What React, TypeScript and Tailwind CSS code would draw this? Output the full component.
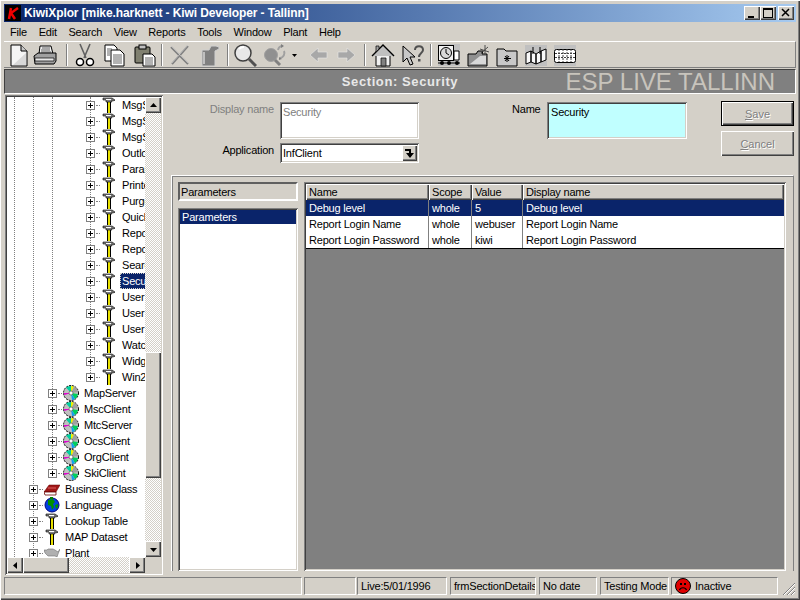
import React from "react"

const raised = "shadow-[inset_1px_1px_0_#fff,inset_-1px_-1px_0_#404040,inset_-2px_-2px_0_#808080]"
const sunken = "shadow-[inset_1px_1px_0_#808080,inset_-1px_-1px_0_#fff,inset_2px_2px_0_#404040,inset_-2px_-2px_0_#d4d0c8]"
const thin = "border border-t-[#808080] border-l-[#808080] border-b-white border-r-white"
const dither = "bg-[repeating-conic-gradient(#d4d0c8_0_25%,#fff_0_50%)] bg-size-[2px_2px]"

const Hammer = () => (
  <svg width="16" height="16" viewBox="0 0 16 16" className="shrink-0">
    <rect x="6" y="3" width="4" height="13" fill="#000" />
    <rect x="7" y="4" width="2" height="12" fill="#e8e000" />
    <path d="M2 1h9l3 2-1 1-2-1v2H5V3H2z" fill="#808080" stroke="#000" strokeWidth="0.6" />
    <rect x="5" y="2" width="5" height="1" fill="#fff" />
  </svg>
)

const Cd = () => (
  <svg width="16" height="16" viewBox="0 0 16 16" className="shrink-0">
    <circle cx="8" cy="8" r="7.500" fill="#c0c0c0" stroke="#000" strokeDasharray="2 1" />
    <path d="M8 8L3 2.500A7 7 0 0 1 8 1z" fill="#00d0a0" />
    <path d="M8 8V1a7 7 0 0 1 3 .7z" fill="#f0f000" />
    <path d="M8 8l3-6.300A7 7 0 0 1 15 7z" fill="#a0a0a0" />
    <path d="M8 8l7 1a7 7 0 0 1-3 5z" fill="#00d060" />
    <path d="M8 8l4 6a7 7 0 0 1-3 1z" fill="#10a0f0" />
    <path d="M8 8H1a7 7 0 0 0 .3 2z" fill="#e000d0" />
    <circle cx="8" cy="8" r="2" fill="#fff" stroke="#404040" strokeWidth="0.6" />
  </svg>
)

const Book = () => (
  <svg width="16" height="16" viewBox="0 0 16 16" className="shrink-0">
    <path d="M0 11l5-7h11l-4 7z" fill="#a01818" stroke="#600" strokeWidth="0.5" />
    <path d="M0 11h12v3H1z" fill="#fff" stroke="#600" strokeWidth="0.8" />
    <path d="M4 7h8" stroke="#e06060" />
  </svg>
)

const Globe = () => (
  <svg width="16" height="16" viewBox="0 0 16 16" className="shrink-0">
    <circle cx="8" cy="8" r="7" fill="#0040e0" stroke="#000080" />
    <path d="M4 3l5-1 2 3-2 2 1 3-2 3-1-4-3-1zM11 8l3-1v3l-2 2z" fill="#009000" />
    <path d="M6 0h3v2H6z" fill="#008000" />
  </svg>
)

const MapIcon = () => (
  <svg width="16" height="16" viewBox="0 0 16 16" className="shrink-0">
    <path d="M0 5h3l1-1h5l2 1 3 2 2-3-2 5-1 3-2-1H4L1 8z" fill="#b0b0b0" stroke="#707070" strokeWidth="0.6" />
  </svg>
)

const Box = () => (
  <span className="w-[9px] h-[9px] shrink-0 bg-white border border-[#808080] relative block">
    <span className="absolute left-[1px] top-[3px] w-[5px] h-[1px] bg-black" />
    <span className="absolute left-[3px] top-[1px] w-[1px] h-[5px] bg-black" />
  </span>
)

type Row = { text: string; level: number; icon: React.ReactNode; selected?: boolean }

const h = <Hammer />
const c = <Cd />
const rows: Row[] = [
  { text: "MsgServer", level: 3, icon: h },
  { text: "MsgServer", level: 3, icon: h },
  { text: "MsgServer", level: 3, icon: h },
  { text: "Outlook", level: 3, icon: h },
  { text: "Parameters", level: 3, icon: h },
  { text: "Printer", level: 3, icon: h },
  { text: "Purge", level: 3, icon: h },
  { text: "QuickFind", level: 3, icon: h },
  { text: "Report", level: 3, icon: h },
  { text: "Report", level: 3, icon: h },
  { text: "Search", level: 3, icon: h },
  { text: "Security", level: 3, icon: h, selected: true },
  { text: "User", level: 3, icon: h },
  { text: "User", level: 3, icon: h },
  { text: "User", level: 3, icon: h },
  { text: "Watch", level: 3, icon: h },
  { text: "Widget", level: 3, icon: h },
  { text: "Win2000", level: 3, icon: h },
  { text: "MapServer", level: 2, icon: c },
  { text: "MscClient", level: 2, icon: c },
  { text: "MtcServer", level: 2, icon: c },
  { text: "OcsClient", level: 2, icon: c },
  { text: "OrgClient", level: 2, icon: c },
  { text: "SkiClient", level: 2, icon: c },
  { text: "Business Class", level: 1, icon: <Book /> },
  { text: "Language", level: 1, icon: <Globe /> },
  { text: "Lookup Table", level: 1, icon: h },
  { text: "MAP Dataset", level: 1, icon: h },
  { text: "Plant", level: 1, icon: <MapIcon /> },
]

const levelPad: Record<number, string> = { 1: "pl-[22px]", 2: "pl-[41px]", 3: "pl-[79px]" }

const Arrow = ({ dir }: { dir: "up" | "down" | "left" | "right" }) => {
  const d = { up: "M1 6h7L4.500 2z", down: "M1 3h7L4.500 7z", left: "M6 1v7L2 4.500z", right: "M3 1v7l4-3.500z" }[dir]
  return (
    <span className={`w-4 h-4 shrink-0 bg-[#d4d0c8] flex items-center justify-center ${raised}`}>
      <svg width="9" height="9" viewBox="0 0 9 9"><path d={d} fill="#000" /></svg>
    </span>
  )
}

const Tree = () => (
  <div className={`w-[158px] h-[480px] p-[2px] flex flex-col bg-white shrink-0 ${sunken}`}>
    <div className="flex flex-1 min-h-0">
      <div className="relative flex-1 overflow-hidden">
        <span className="absolute left-[7px] top-0 bottom-0 border-l border-dotted border-[#808080]" />
        <span className="absolute left-[26px] top-0 h-[457px] border-l border-dotted border-[#808080]" />
        <span className="absolute left-[45px] top-0 h-[376px] border-l border-dotted border-[#808080]" />
        <span className="absolute left-[83px] top-0 h-[280px] border-l border-dotted border-[#808080]" />
        <div className="relative">
          {rows.map((r, i) => (
            <div key={i} className={`h-4 flex items-center whitespace-nowrap ${levelPad[r.level]}`}>
              <Box />
              <span className="w-[4px] mx-[1px] border-t border-dotted border-[#808080] shrink-0" />
              <span className="shrink-0">{r.icon}</span>
              {r.selected ? (
                <span className="ml-[3px] pl-[2px] pr-[8px] h-4 leading-4 bg-[#0a246a] text-white outline-1 outline-dotted outline-[#d4d0c8] -outline-offset-1">{r.text}</span>
              ) : (
                <span className="ml-[5px]">{r.text}</span>
              )}
            </div>
          ))}
        </div>
      </div>
      <div className="w-4 flex flex-col shrink-0">
        <Arrow dir="up" />
        <div className={`h-[239px] ${dither}`} />
        <div className={`h-[126px] bg-[#d4d0c8] ${raised}`} />
        <div className={`flex-1 ${dither}`} />
        <Arrow dir="down" />
      </div>
    </div>
    <div className="h-4 flex shrink-0">
      <Arrow dir="left" />
      <div className={`w-[46px] bg-[#d4d0c8] ${raised}`} />
      <div className={`flex-1 ${dither}`} />
      <Arrow dir="right" />
      <div className="w-4 bg-[#d4d0c8]" />
    </div>
  </div>
)

const Ico = ({ className = "", children }: { className?: string; children: React.ReactNode }) => (
  <svg width="24" height="24" viewBox="0 0 24 24" className={`shrink-0 ${className}`}>{children}</svg>
)

const Sep = ({ className = "" }: { className?: string }) => (
  <span className={`w-[2px] h-[22px] border-l border-l-[#808080] border-r border-r-white shrink-0 ${className}`} />
)

const Toolbar = () => (
  <div className="h-[27px] flex items-center border-t border-t-white border-b border-b-[#808080] border-r border-r-[#808080] pl-[3px] shrink-0">
    <Ico>
      <path d="M4 2h10l6 6v15H4z" fill="#f4f4f4" stroke="#000" />
      <path d="M14 2v6h6" fill="#c8c8c8" stroke="#000" />
      <path d="M6 22L19 10v12z" fill="#d8d8d8" />
    </Ico>
    <Ico className="ml-[2px]">
      <path d="M7 3h11l2 8H6z" fill="#f0f0f0" stroke="#000" />
      <path d="M9 5h8M8 7h9M8 9h10" stroke="#606060" />
      <path d="M1 13l4-3h18v8l-2 3H2z" fill="#a0a0a0" stroke="#000" />
      <path d="M2 15h19v3H2z" fill="#e8e8e8" stroke="#000" strokeWidth="0.7" />
    </Ico>
    <Sep className="ml-[9px]" />
    <Ico className="ml-[5px]">
      <path d="M7 1l6 14M17 1l-6 14" stroke="#606060" strokeWidth="1.600" fill="none" />
      <circle cx="7" cy="19" r="3.500" fill="#fff" stroke="#000" strokeWidth="1.500" />
      <circle cx="17" cy="19" r="3.500" fill="#fff" stroke="#000" strokeWidth="1.500" />
    </Ico>
    <Ico className="ml-[5px]">
      <path d="M3 2h9l3 3v13H3z" fill="#fff" stroke="#000" />
      <path d="M9 7h9l4 4v12H9z" fill="#fff" stroke="#000" />
      <path d="M11 12h9M11 14h9M11 16h9M11 18h9M11 20h9M5 6h5M5 8h3M5 10h3M5 12h3" stroke="#404040" strokeWidth="0.8" />
    </Ico>
    <Ico className="ml-[6px]">
      <rect x="3" y="4" width="15" height="16" rx="1" fill="#808070" stroke="#000" />
      <rect x="7" y="2" width="7" height="4" fill="#c0c0c0" stroke="#000" />
      <path d="M11 11h9l3 3v9H11z" fill="#fff" stroke="#000" />
      <path d="M13 15h8M13 17h8M13 19h8M13 21h8" stroke="#404040" strokeWidth="0.8" />
    </Ico>
    <Sep className="ml-[5px]" />
    <Ico className="ml-[5px]">
      <path d="M3 4l17 17M20 3L4 21" stroke="#808080" strokeWidth="2" />
      <path d="M3 3l17 17M20 2L4 20" stroke="#d8d8d8" strokeWidth="0.6" />
    </Ico>
    <Ico className="ml-[5px]">
      <path d="M5 7h7l2-4h5l3 1v2l-4 2v15H5z" fill="#808080" stroke="#d0d0d0" />
      <path d="M7 9v12" stroke="#fff" />
    </Ico>
    <Sep className="ml-[6px]" />
    <Ico className="ml-[4px]">
      <circle cx="10" cy="10" r="8" fill="#e8e8e8" stroke="#404040" strokeWidth="1.500" />
      <path d="M6 6a6 6 0 0 1 5-2" stroke="#fff" strokeWidth="2" fill="none" />
      <path d="M16 16l7 7" stroke="#505050" strokeWidth="3" />
    </Ico>
    <Ico className="ml-[6px]">
      <circle cx="8" cy="12" r="6.500" fill="#909090" stroke="#a0a0a0" />
      <path d="M12 17l5 5" stroke="#808080" strokeWidth="3" />
      <path d="M15 7a5 5 0 0 1 5-4M21 8a5 5 0 0 1-4 7" stroke="#a0a0a0" strokeWidth="2" fill="none" />
      <path d="M18 1l3 2-3 2zM19 16l-3-2v3z" fill="#808080" />
    </Ico>
    <svg width="6" height="24" viewBox="0 0 6 24" className="ml-[5px] shrink-0"><path d="M0 11h5l-2.500 3z" fill="#000" /></svg>
    <Ico className="ml-[8px]">
      <path d="M4 12l8-7v4h9v6h-9v4z" fill="#a8a8a8" stroke="#e8e8e8" strokeWidth="0.600" />
    </Ico>
    <Ico className="ml-[4px]">
      <path d="M21 12l-8-7v4H4v6h9v4z" fill="#a8a8a8" stroke="#e8e8e8" strokeWidth="0.600" />
    </Ico>
    <Sep className="ml-[6px]" />
    <Ico className="ml-[5px]">
      <path d="M5 11v12h14V11" fill="#f0f0f0" stroke="#000" />
      <path d="M1 13L12 2l11 11" fill="#c0c0c0" stroke="#000" strokeWidth="1.400" />
      <path d="M5 3h3v3l-3 3z" fill="#a0a0a0" stroke="#000" strokeWidth="0.7" />
      <path d="M10 15h5v8h-5z" fill="#808080" stroke="#000" strokeWidth="0.7" />
    </Ico>
    <Ico className="ml-[5px]">
      <path d="M3 3v16l4-4 3 7 3-1-3-7h5z" fill="#c8c8c8" stroke="#000" />
      <path d="M15 7c0-5 8-5 8 0 0 3-4 3-4 7" fill="none" stroke="#505050" strokeWidth="2" />
      <rect x="18" y="16" width="2.500" height="2.500" fill="#505050" />
    </Ico>
    <Sep className="ml-[6px]" />
    <Ico className="ml-[5px]">
      <rect x="1" y="1" width="22" height="22" fill="#c0c0c0" />
      <rect x="1.500" y="2.500" width="15" height="15" fill="#f0f0f0" stroke="#000" />
      <path d="M17 8h5v9h-5z" fill="#fff" stroke="#000" />
      <circle cx="9" cy="10" r="5.500" fill="#d8d8d8" stroke="#000" />
      <path d="M9 6v4l3 2" stroke="#000" fill="none" />
      <path d="M1 20h22" stroke="#000" />
      <circle cx="5" cy="20" r="2" /><circle cx="12" cy="20" r="2" /><circle cx="20" cy="20" r="2" />
    </Ico>
    <Ico className="ml-[5px]">
      <path d="M2 11h8l2-3h5l-1 3h5v12H2z" fill="#909090" stroke="#000" />
      <path d="M4 21L14 13h6v8z" fill="#d8d8d8" />
      <path d="M19 2v9M14 6l9 3M15 10l7-6" stroke="#404040" strokeWidth="0.9" />
    </Ico>
    <Ico className="ml-[5px]">
      <path d="M2 6h7l2 2h11v15H2z" fill="#c8c8c8" stroke="#000" />
      <path d="M12 12v7M9 15.500h7M10 13l4 5M14 13l-4 5" stroke="#000" strokeWidth="1" />
    </Ico>
    <Ico className="ml-[5px]">
      <rect x="1" y="2" width="22" height="21" fill="#c0c0c0" />
      <path d="M2 10l5-2v11l-5 2zM7 8l5 3v10l-5-2zM12 11l5-3v11l-5 2zM17 8l5-2v11l-5 2z" fill="#f8f8f8" stroke="#000" />
      <path d="M9 4v7M16 4v7" stroke="#000" />
    </Ico>
    <Ico className="ml-[5px]">
      <rect x="1" y="2" width="22" height="21" fill="#c0c0c0" />
      <rect x="1.500" y="6.500" width="21" height="13" rx="2" fill="#fff" stroke="#000" />
      <path d="M6 6v13M10 6v13M14 6v13M18 6v13M2 10.500h20M2 14.500h20" stroke="#404040" strokeDasharray="2 1" />
    </Ico>
  </div>
)

const WinBtn = ({ children, className = "" }: { children: React.ReactNode; className?: string }) => (
  <span className={`w-4 h-[14px] bg-[#d4d0c8] flex items-center justify-center ${raised} ${className}`}>
    <svg width="10" height="10" viewBox="0 0 10 10">{children}</svg>
  </span>
)

const TableRow = ({ cells, selected }: { cells: string[]; selected?: boolean }) => (
  <div className={`grid grid-cols-[123px_43px_51px_1fr] h-4 leading-4 ${selected ? "bg-[#0a246a] text-white" : "bg-white"}`}>
    {cells.map((t, i) => (
      <div key={i} className={`pl-[3px] whitespace-nowrap ${i < 3 ? "border-r border-r-[#808080]" : ""}`}>{t}</div>
    ))}
  </div>
)

const Status = ({ className, children }: { className: string; children?: React.ReactNode }) => (
  <div className={`${thin} h-[18px] flex items-center pl-[3px] overflow-hidden whitespace-nowrap shrink-0 ${className}`}>{children}</div>
)

export default function App() {
  return (
    <div className={`w-[800px] h-[600px] bg-[#d4d0c8] p-[4px] flex flex-col text-[11px] leading-[14px] text-black overflow-hidden font-['Liberation_Sans',sans-serif] tracking-[-0.2px] ${raised}`}>
      <div className="h-[18px] bg-linear-to-r from-[#0a246a] to-[#a6caf0] flex items-center pl-[1px] pr-[2px] text-white font-bold text-[12px] tracking-[-0.1px] shrink-0">
        <svg width="16" height="16" viewBox="0 0 16 16" className="shrink-0">
          <rect width="16" height="16" fill="#000" />
          <path d="M6 3L4 14M13 3L6 8l4 6" stroke="#f00000" strokeWidth="2.500" fill="none" />
        </svg>
        <span className="ml-[3px]">KiwiXplor [mike.harknett - Kiwi Developer - Tallinn]</span>
        <span className="ml-auto flex">
          <WinBtn><path d="M1 8h6v2H1z" /></WinBtn>
          <WinBtn><path d="M0 0h10v10H0zM1 2v7h8V2z" fillRule="evenodd" /></WinBtn>
          <WinBtn className="ml-[2px]"><path d="M1 1l7 7M8 1L1 8" stroke="#000" strokeWidth="1.500" /></WinBtn>
        </span>
      </div>
      <div className="h-[19px] flex items-center shrink-0 pl-[6px] gap-[11.7px] pt-[1px]">
        {["File", "Edit", "Search", "View", "Reports", "Tools", "Window", "Plant", "Help"].map((m) => <span key={m}>{m}</span>)}
      </div>
      <Toolbar />
      <div className="h-[25px] mt-[1px] bg-[#808080] grid grid-cols-[1fr_auto_1fr] items-center shrink-0 border border-t-[#404040] border-l-[#404040] border-b-white border-r-white">
        <span />
        <span className="font-bold text-[13px] tracking-[0.6px] text-[#e8e8e8]">Section: Security</span>
        <span className="justify-self-end pr-[20px] text-[24px] tracking-normal text-[#c8c4bc]">ESP LIVE TALLINN</span>
      </div>
      <div className="flex flex-1 min-h-0 pl-[1px] pt-[1px]">
        <Tree />
        <div className="flex-1 flex flex-col min-w-0">
          <div className="h-[80px] flex pt-[7px] shrink-0">
            <div className="flex flex-col gap-[4px] w-[256px]">
              <div className="flex gap-[6px]">
                <span className="w-[111px] text-right text-[#808080]">Display name</span>
                <div className={`w-[139px] h-[37px] bg-white px-[3px] py-[3px] text-[#808080] ${sunken}`}>Security</div>
              </div>
              <div className="flex gap-[6px]">
                <span className="w-[111px] text-right">Application</span>
                <div className={`w-[139px] h-[20px] bg-white pl-[3px] pr-[2px] flex items-center justify-between ${sunken}`}>
                  <span>InfClient</span>
                  <span className={`w-[15px] h-[16px] bg-[#d4d0c8] flex items-center justify-center ${raised}`}>
                    <svg width="11" height="11" viewBox="0 0 11 11"><path d="M1 1h6v4h3L6 10 2 5h3V3H1z" fill="#000" /></svg>
                  </span>
                </div>
              </div>
            </div>
            <span className="ml-[93px] w-[35px]">Name</span>
            <div className={`w-[140px] h-[37px] bg-[#c0ffff] px-[4px] py-[3px] ${sunken}`}>Security</div>
            <div className="ml-[34px] w-[73px] flex flex-col gap-[5px] -mt-[1px] text-[#808080] tracking-normal [text-shadow:1px_1px_0_#fff]">
              <div className="h-[25px] border border-black bg-[#d4d0c8] flex items-center justify-center">
                <span className={`w-full h-full flex items-center justify-center ${raised}`}><span><u>S</u>ave</span></span>
              </div>
              <div className={`h-[25px] bg-[#d4d0c8] flex items-center justify-center ${raised}`}><span><u>C</u>ancel</span></div>
            </div>
          </div>
          <div className="ml-[8px] mr-[2px] flex-1 min-h-0 mb-[3px] flex gap-[6px] pl-[6px] pt-[6px] border-t border-l border-r border-t-white border-l-white border-r-[#808080] shadow-[inset_1px_1px_0_#808080]">
            <div className="w-[120px] flex flex-col gap-[7px] shrink-0">
              <div className="h-[19px] flex items-center pl-[1px] border-2 border-t-[#606060] border-l-[#606060] border-b-white border-r-white">Parameters</div>
              <div className={`flex-1 bg-white p-[2px] ${sunken}`}>
                <div className="h-[14px] bg-[#0a246a] text-white pl-[2px]">Parameters</div>
              </div>
            </div>
            <div className={`w-[482px] bg-[#808080] p-[2px] flex flex-col ${sunken}`}>
              <div className="grid grid-cols-[123px_43px_51px_1fr] h-4 leading-4 bg-[#d4d0c8]">
                {["Name", "Scope", "Value", "Display name"].map((t) => (
                  <div key={t} className={`pl-[3px] ${raised}`}>{t}</div>
                ))}
              </div>
              <TableRow selected cells={["Debug level", "whole", "5", "Debug level"]} />
              <TableRow cells={["Report Login Name", "whole", "webuser", "Report Login Name"]} />
              <TableRow cells={["Report Login Password", "whole", "kiwi", "Report Login Password"]} />
              <div className="h-[1px] bg-black" />
            </div>
          </div>
        </div>
      </div>
      <div className="h-[20px] flex items-center shrink-0 mt-[2px]">
        <Status className="w-[298px]" />
        <Status className="w-[52px] ml-[2px]" />
        <Status className="w-[90px] ml-[1px]">Live:5/01/1996</Status>
        <Status className="w-[86px] ml-[3px]">frmSectionDetails</Status>
        <Status className="w-[58px] ml-[3px]">No date</Status>
        <Status className="w-[69px] ml-[3px]">Testing Mode</Status>
        <Status className="w-[107px] ml-[2px] pl-[1px]">
          <svg width="16" height="16" viewBox="0 0 16 16" className="shrink-0">
            <circle cx="8" cy="8" r="7.500" fill="#e00000" stroke="#000" />
            <rect x="5" y="5" width="2" height="2" /><rect x="9" y="5" width="2" height="2" />
            <path d="M4.500 12c1-3 6-3 7 0" stroke="#000" fill="none" strokeWidth="1.200" />
          </svg>
          <span className="ml-[4px]">Inactive</span>
        </Status>
        <svg width="16" height="16" viewBox="0 0 16 16" className="ml-auto self-end shrink-0">
          <path d="M3 15L15 3M7 15l8-8M11 15l4-4" stroke="#808080" />
          <path d="M4 15L15 4M8 15l7-7M12 15l3-3" stroke="#fff" />
        </svg>
      </div>
    </div>
  )
}
